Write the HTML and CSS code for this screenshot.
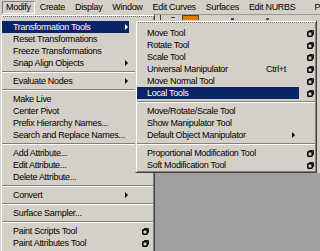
FILE: index.html
```html
<!DOCTYPE html>
<html>
<head>
<meta charset="utf-8">
<link rel="stylesheet" href="styles.css">
</head>
<body>
<div class="menubar">
  <span class="mb-item pressed">Modify</span>
  <span class="mb-item">Create</span>
  <span class="mb-item">Display</span>
  <span class="mb-item">Window</span>
  <span class="mb-item">Edit Curves</span>
  <span class="mb-item">Surfaces</span>
  <span class="mb-item">Edit NURBS</span>
  <span class="mb-item last">Poly</span>
</div>
<div class="shelf">
  <div class="toolrow">
    <span class="handle"></span>
    <span class="dash"></span>
    <span class="swatch"></span>
    <span class="dot blue"></span>
    <span class="dot dark"></span>
  </div>
</div>

<div class="menu main">
  <div class="tear"></div>
  <div class="item hl"><div class="lab"><span class="txt">Transformation Tools</span><span class="arr"></span></div><div class="opt"></div></div>
  <div class="item"><div class="lab"><span class="txt">Reset Transformations</span></div><div class="opt"></div></div>
  <div class="item"><div class="lab"><span class="txt">Freeze Transformations</span></div><div class="opt"></div></div>
  <div class="item"><div class="lab"><span class="txt">Snap Align Objects</span><span class="arr"></span></div><div class="opt"></div></div>
  <div class="sep"></div>
  <div class="item"><div class="lab"><span class="txt">Evaluate Nodes</span><span class="arr"></span></div><div class="opt"></div></div>
  <div class="sep"></div>
  <div class="item"><div class="lab"><span class="txt">Make Live</span></div><div class="opt"></div></div>
  <div class="item"><div class="lab"><span class="txt">Center Pivot</span></div><div class="opt"></div></div>
  <div class="item"><div class="lab"><span class="txt">Prefix Hierarchy Names...</span></div><div class="opt"></div></div>
  <div class="item"><div class="lab"><span class="txt">Search and Replace Names...</span></div><div class="opt"></div></div>
  <div class="sep"></div>
  <div class="item"><div class="lab"><span class="txt">Add Attribute...</span></div><div class="opt"></div></div>
  <div class="item"><div class="lab"><span class="txt">Edit Attribute...</span></div><div class="opt"></div></div>
  <div class="item"><div class="lab"><span class="txt">Delete Attribute...</span></div><div class="opt"></div></div>
  <div class="sep"></div>
  <div class="item"><div class="lab"><span class="txt">Convert</span><span class="arr"></span></div><div class="opt"></div></div>
  <div class="sep"></div>
  <div class="item"><div class="lab"><span class="txt">Surface Sampler...</span></div><div class="opt"></div></div>
  <div class="sep"></div>
  <div class="item"><div class="lab"><span class="txt">Paint Scripts Tool</span></div><div class="opt"><svg class="obox" viewBox="0 0 7 7" width="7" height="7"><path d="M2.2 0.6H6.4V4.8" fill="none" stroke="#000" stroke-width="1"/><rect x="0.8" y="1.8" width="4.4" height="4.4" rx="0.6" fill="none" stroke="#000" stroke-width="1.5"/></svg></div></div>
  <div class="item"><div class="lab"><span class="txt">Paint Attributes Tool</span></div><div class="opt"><svg class="obox" viewBox="0 0 7 7" width="7" height="7"><path d="M2.2 0.6H6.4V4.8" fill="none" stroke="#000" stroke-width="1"/><rect x="0.8" y="1.8" width="4.4" height="4.4" rx="0.6" fill="none" stroke="#000" stroke-width="1.5"/></svg></div></div>
</div>

<div class="menu sub">
  <div class="tear"></div>
  <div class="item"><div class="lab"><span class="txt">Move Tool</span></div><div class="opt"><svg class="obox" viewBox="0 0 7 7" width="7" height="7"><path d="M2.2 0.6H6.4V4.8" fill="none" stroke="#000" stroke-width="1"/><rect x="0.8" y="1.8" width="4.4" height="4.4" rx="0.6" fill="none" stroke="#000" stroke-width="1.5"/></svg></div></div>
  <div class="item"><div class="lab"><span class="txt">Rotate Tool</span></div><div class="opt"><svg class="obox" viewBox="0 0 7 7" width="7" height="7"><path d="M2.2 0.6H6.4V4.8" fill="none" stroke="#000" stroke-width="1"/><rect x="0.8" y="1.8" width="4.4" height="4.4" rx="0.6" fill="none" stroke="#000" stroke-width="1.5"/></svg></div></div>
  <div class="item"><div class="lab"><span class="txt">Scale Tool</span></div><div class="opt"><svg class="obox" viewBox="0 0 7 7" width="7" height="7"><path d="M2.2 0.6H6.4V4.8" fill="none" stroke="#000" stroke-width="1"/><rect x="0.8" y="1.8" width="4.4" height="4.4" rx="0.6" fill="none" stroke="#000" stroke-width="1.5"/></svg></div></div>
  <div class="item"><div class="lab"><span class="txt">Universal Manipulator</span><span class="key">Ctrl+t</span></div><div class="opt"><svg class="obox" viewBox="0 0 7 7" width="7" height="7"><path d="M2.2 0.6H6.4V4.8" fill="none" stroke="#000" stroke-width="1"/><rect x="0.8" y="1.8" width="4.4" height="4.4" rx="0.6" fill="none" stroke="#000" stroke-width="1.5"/></svg></div></div>
  <div class="item"><div class="lab"><span class="txt">Move Normal Tool</span></div><div class="opt"><svg class="obox" viewBox="0 0 7 7" width="7" height="7"><path d="M2.2 0.6H6.4V4.8" fill="none" stroke="#000" stroke-width="1"/><rect x="0.8" y="1.8" width="4.4" height="4.4" rx="0.6" fill="none" stroke="#000" stroke-width="1.5"/></svg></div></div>
  <div class="item hl"><div class="lab"><span class="txt">Local Tools</span></div><div class="opt"><svg class="obox" viewBox="0 0 7 7" width="7" height="7"><path d="M2.2 0.6H6.4V4.8" fill="none" stroke="#000" stroke-width="1"/><rect x="0.8" y="1.8" width="4.4" height="4.4" rx="0.6" fill="none" stroke="#000" stroke-width="1.5"/></svg></div></div>
  <div class="sep"></div>
  <div class="item"><div class="lab"><span class="txt">Move/Rotate/Scale Tool</span></div><div class="opt"></div></div>
  <div class="item"><div class="lab"><span class="txt">Show Manipulator Tool</span></div><div class="opt"></div></div>
  <div class="item"><div class="lab"><span class="txt">Default Object Manipulator</span><span class="arr"></span></div><div class="opt"></div></div>
  <div class="sep"></div>
  <div class="item"><div class="lab"><span class="txt">Proportional Modification Tool</span></div><div class="opt"><svg class="obox" viewBox="0 0 7 7" width="7" height="7"><path d="M2.2 0.6H6.4V4.8" fill="none" stroke="#000" stroke-width="1"/><rect x="0.8" y="1.8" width="4.4" height="4.4" rx="0.6" fill="none" stroke="#000" stroke-width="1.5"/></svg></div></div>
  <div class="item"><div class="lab"><span class="txt">Soft Modification Tool</span></div><div class="opt"><svg class="obox" viewBox="0 0 7 7" width="7" height="7"><path d="M2.2 0.6H6.4V4.8" fill="none" stroke="#000" stroke-width="1"/><rect x="0.8" y="1.8" width="4.4" height="4.4" rx="0.6" fill="none" stroke="#000" stroke-width="1.5"/></svg></div></div>
</div>
</body>
</html>
```
FILE: styles.css
```css
html, body {
  margin: 0;
  padding: 0;
}
body {
  width: 320px;
  height: 251px;
  overflow: hidden;
  position: relative;
  background: #a0a0a0;
  font-family: "Liberation Sans", Arial, sans-serif;
  font-size: 9px;
  letter-spacing: -0.3px;
  color: #000;
}
.menubar {
  height: 14px;
  background: #d4d0c8;
  display: flex;
  align-items: center;
  padding-left: 2px;
  box-sizing: border-box;
  overflow: hidden;
}
.mb-item {
  padding: 0 5px;
  line-height: 11px;
  white-space: nowrap;
}
.mb-item.pressed {
  padding: 0 3px;
  border: 1px solid;
  border-color: #808080 #fff #fff #808080;
}
.mb-item.last {
  padding-left: 14px;
}
.shelf {
  height: 159px;
  background: #d4d0c8;
  border-top: 1px solid #9a9890;
  box-sizing: border-box;
}
.toolrow {
  height: 6px;
  display: flex;
  align-items: flex-start;
  padding-left: 160px;
}
.handle {
  width: 1px;
  height: 6px;
  background: #404040;
  margin-right: 10px;
}
.dash {
  width: 4px;
  height: 1px;
  background: #404040;
  margin-top: 2px;
  margin-right: 7px;
}
.swatch {
  width: 15px;
  height: 5px;
  background: #e0780a;
  border: 1px solid #504030;
  margin-right: 32px;
}
.dot {
  width: 3px;
  height: 2px;
  margin-top: 3px;
}
.dot.blue { background: #3040a0; margin-right: 32px; }
.dot.dark { background: #505050; }

.menu {
  position: absolute;
  background: #d4d0c8;
  border: 1px solid;
  border-color: #d4d0c8 #404040 #404040 #d4d0c8;
  box-shadow: inset 1px 1px #fff, inset -1px -1px #808080;
  box-sizing: border-box;
  padding: 0 1px;
}
.menu.main {
  left: 0;
  top: 14px;
  width: 155px;
  height: 237px;
  border-bottom: 0;
  box-shadow: inset 1px 1px #fff, inset -1px 0 #808080;
  overflow: hidden;
}
.menu.sub {
  left: 135px;
  top: 20px;
  width: 182px;
  padding-bottom: 1px;
}
.tear {
  height: 6px;
  box-sizing: border-box;
  padding-top: 1px;
}
.tear::before {
  content: "";
  display: block;
  height: 1px;
  margin: 0 1px;
  background: repeating-linear-gradient(90deg, #6a6a6a 0 1px, transparent 1px 2px);
}
.item {
  height: 12px;
  display: flex;
}
.lab {
  flex: 1;
  display: flex;
  align-items: center;
  padding-left: 11px;
  white-space: nowrap;
}
.sub .lab { padding-left: 10px; }
.txt { flex: 1; }
.item.hl .lab {
  background: #0a246a;
  color: #fff;
}
.opt {
  display: flex;
  align-items: center;
  justify-content: flex-end;
  padding-right: 1px;
}
.main .opt {
  width: 20px;
  padding-right: 4px;
}
.sub .opt {
  width: 15px;
}
.obox { display: block; }
.arr {
  width: 0;
  height: 0;
  border-left: 3px solid #000;
  border-top: 3px solid transparent;
  border-bottom: 3px solid transparent;
  margin-right: 1px;
}
.sub .arr { margin-right: 4px; }
.item.hl .arr { border-left-color: #fff; }
.key {
  margin-right: 13px;
}
.sep {
  height: 6px;
  box-sizing: border-box;
  padding-top: 2px;
}
.sep::before {
  content: "";
  display: block;
  height: 0;
  border-top: 1px solid #808080;
  border-bottom: 1px solid #fff;
}
```
